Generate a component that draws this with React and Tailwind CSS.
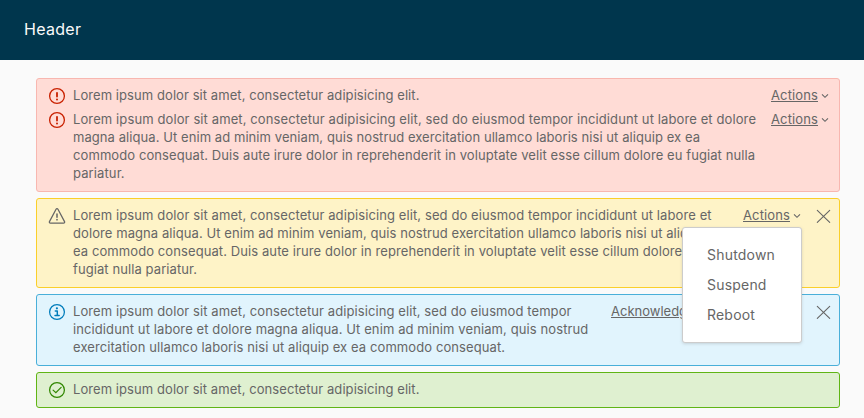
const svgProps = { fill: 'currentColor', viewBox: '0 0 36 36', 'aria-hidden': true };

function ErrorIcon() {
  return (
    <svg {...svgProps} className="size-[18px] text-[#c92100]">
      <circle cx="18" cy="25.2" r="2" />
      <path d="M18 20.8a1.8 1.8 0 0 0 1.8-1.8v-7.4a1.8 1.8 0 1 0-3.6 0v7.4a1.8 1.8 0 0 0 1.8 1.8Z" />
      <circle cx="18" cy="18" r="14.8" fill="none" stroke="currentColor" strokeWidth="2.6" />
    </svg>
  );
}

function WarningIcon() {
  return (
    <svg {...svgProps} className="size-[18px] text-[#666]">
      <path d="M18 21.9a1.5 1.5 0 0 0 1.5-1.5v-6.2a1.5 1.5 0 1 0-3 0v6.2a1.5 1.5 0 0 0 1.5 1.5Z" />
      <circle cx="18" cy="25.4" r="1.7" />
      <path
        d="M16.1 4.4 2.9 29.3a2.1 2.1 0 0 0 1.9 3.1h26.4a2.1 2.1 0 0 0 1.9-3.1L19.9 4.4a2.15 2.15 0 0 0-3.8 0Z"
        fill="none"
        stroke="currentColor"
        strokeWidth="2.5"
        strokeLinejoin="round"
      />
    </svg>
  );
}

function InfoIcon() {
  return (
    <svg {...svgProps} className="size-[18px] text-[#007cbb]">
      <circle cx="17.8" cy="10.6" r="2.2" />
      <path d="M14.6 16h4v9M14 25h8.4" fill="none" stroke="currentColor" strokeWidth="2.9" strokeLinecap="round" strokeLinejoin="round" />
      <circle cx="18" cy="18" r="14.8" fill="none" stroke="currentColor" strokeWidth="2.5" />
    </svg>
  );
}

function SuccessIcon() {
  return (
    <svg {...svgProps} className="size-[18px] text-[#318700]">
      <circle cx="18" cy="18" r="14.8" fill="none" stroke="currentColor" strokeWidth="2.5" />
      <path d="M10.2 18.2l5.5 5.2L26.3 12.8" fill="none" stroke="currentColor" strokeWidth="2.4" strokeLinecap="round" />
    </svg>
  );
}

function Chevron() {
  return (
    <svg viewBox="0 0 8 6" className="ml-[3px] h-1.5 w-2" fill="none" stroke="#666" strokeWidth="1.1" aria-hidden>
      <path d="M1 1.3 4 4.3 7 1.3" />
    </svg>
  );
}

function CloseButton() {
  return (
    <button type="button" aria-label="Close" className="-my-0.5 mr-[7px] flex h-[22px] w-4 items-center justify-center">
      <svg viewBox="0 0 16 16" className="size-4" fill="none" stroke="#666" strokeWidth="1.1" aria-hidden>
        <path d="M1.3 2.3 13.7 14.3M13.7 2.3 1.3 14.3" strokeLinecap="round" />
      </svg>
    </button>
  );
}

function ActionsToggle() {
  return (
    <button type="button" className="flex h-[18px] items-center">
      <span className="-mt-0.5 w-[47px] whitespace-nowrap text-left tracking-[0.12px] underline underline-offset-1">Actions</span>
      <Chevron />
    </button>
  );
}

function AlertItem({ icon, lines, children }) {
  return (
    <div className="flex items-start">
      <span className="mr-[7px] flex h-[18px] w-[18px] items-center">{icon}</span>
      <p className="-mt-px mb-px flex-1">
        {lines.map(([text, tracking]) => (
          <span key={text} className={`block w-0 whitespace-nowrap ${tracking}`}>{text}</span>
        ))}
      </p>
      {children}
    </div>
  );
}

function Alert({ className, children }) {
  return (
    <section className={`flex flex-col gap-1.5 rounded-[3px] border py-2 pl-[11px] ${className}`}>{children}</section>
  );
}

function Menu() {
  return (
    <div className="absolute top-5 left-[-61px] z-10 h-[116px] w-[120px] rounded-[3px] border border-[#ccc] bg-white py-3 text-[14px] leading-[30px] tracking-[0.2px] shadow-[0_1px_3px_rgba(115,115,115,0.25)]">
      {['Shutdown', 'Suspend', 'Reboot'].map((item) => (
        <div key={item} className="pl-6">{item}</div>
      ))}
    </div>
  );
}

export default function App() {
  return (
    <div className="h-[418px] w-[864px] overflow-hidden bg-[#fafafa] font-[Inter,sans-serif] text-[13px] leading-[18px] text-[#666]">
      <header className="flex h-[60px] items-center bg-[#00364d] pb-0.5 pl-6 text-[16px] tracking-[0.3px] text-[#fafafa]">Header</header>
      <main className="flex flex-col gap-1.5 px-6 pt-[18px] pl-9">
        <Alert className="border-[#f8b7b0] bg-[#ffdcd6]">
          <AlertItem icon={<ErrorIcon />} lines={[['Lorem ipsum dolor sit amet, consectetur adipisicing elit.', 'tracking-[0.07px]']]}>
            <div className="mr-[10px]"><ActionsToggle /></div>
          </AlertItem>
          <AlertItem
            icon={<ErrorIcon />}
            lines={[
              ['Lorem ipsum dolor sit amet, consectetur adipisicing elit, sed do eiusmod tempor incididunt ut labore et dolore', 'tracking-[0.11px]'],
              ['magna aliqua. Ut enim ad minim veniam, quis nostrud exercitation ullamco laboris nisi ut aliquip ex ea', 'tracking-[0.07px]'],
              ['commodo consequat. Duis aute irure dolor in reprehenderit in voluptate velit esse cillum dolore eu fugiat nulla', 'tracking-[0.09px]'],
              ['pariatur.', 'tracking-[0.11px]'],
            ]}
          >
            <div className="mr-[10px]"><ActionsToggle /></div>
          </AlertItem>
        </Alert>
        <Alert className="border-[#facf2a] bg-[#fef3c7]">
          <AlertItem
            icon={<WarningIcon />}
            lines={[
              ['Lorem ipsum dolor sit amet, consectetur adipisicing elit, sed do eiusmod tempor incididunt ut labore et', 'tracking-[0.1px]'],
              ['dolore magna aliqua. Ut enim ad minim veniam, quis nostrud exercitation ullamco laboris nisi ut aliquip ex', 'tracking-[0.08px]'],
              ['ea commodo consequat. Duis aute irure dolor in reprehenderit in voluptate velit esse cillum dolore eu', 'tracking-[0.09px]'],
              ['fugiat nulla pariatur.', 'tracking-[0.09px]'],
            ]}
          >
            <div className="relative mr-[15px]">
              <ActionsToggle />
              <Menu />
            </div>
            <CloseButton />
          </AlertItem>
        </Alert>
        <Alert className="border-[#49afd9] bg-[#e1f4fd]">
          <AlertItem
            icon={<InfoIcon />}
            lines={[
              ['Lorem ipsum dolor sit amet, consectetur adipisicing elit, sed do eiusmod tempor', 'tracking-[0.09px]'],
              ['incididunt ut labore et dolore magna aliqua. Ut enim ad minim veniam, quis nostrud', 'tracking-[0.1px]'],
              ['exercitation ullamco laboris nisi ut aliquip ex ea commodo consequat.', 'tracking-[0.09px]'],
            ]}
          >
            <div className="-mt-px w-[205px] underline underline-offset-1">Acknowledge</div>
            <CloseButton />
          </AlertItem>
        </Alert>
        <Alert className="border-[#60b515] bg-[#dff0d0]">
          <AlertItem icon={<SuccessIcon />} lines={[['Lorem ipsum dolor sit amet, consectetur adipisicing elit.', 'tracking-[0.07px]']]} />
        </Alert>
      </main>
    </div>
  );
}
